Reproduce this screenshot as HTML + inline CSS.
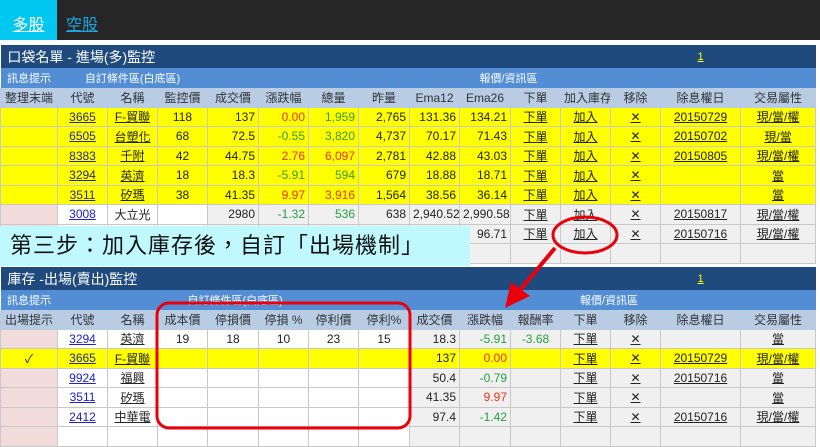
<!DOCTYPE html>
<html><head><meta charset="utf-8"><style>
*{margin:0;padding:0;box-sizing:border-box}
body{width:820px;height:443px;overflow:hidden;background:#fff;font-family:"Liberation Sans","Noto Sans CJK TC",sans-serif;font-size:12px;color:#222;position:relative}
.top{position:absolute;left:0;top:0;width:820px;height:40px;background:#262626}
.tab1{position:absolute;left:0;top:0;width:57px;height:40px;background:#00c8f0;color:#fff;font-size:16px;text-align:center;line-height:52px;text-decoration:underline}
.tab2{position:absolute;left:66px;top:0;height:40px;color:#19a8e0;font-size:16px;line-height:52px;text-decoration:underline}
table{position:absolute;left:0;border-collapse:collapse;table-layout:fixed;width:815px}
td{border:1px solid #c8c8c8;text-align:center;white-space:nowrap;overflow:hidden;padding:0 3px;height:19.5px;background:#f0f0f0}
.ti td{background:#1f4a7e;color:#fff;font-size:14px;text-align:left;border:none;height:23px}
.se td{background:#538ed5;color:#fff;border:none;height:20px;font-size:11px}
.hd td{background:#b8cce4;color:#333;font-size:12px;height:19px;border-color:#b8cce4}
.y td{background:#ff0}
td.r{text-align:right}
td.w{background:#fff}
td.p{background:#f2dcdb}
.u{text-decoration:underline}
.b{color:#2020d0;text-decoration:underline}
.g{color:#3a9a20}.rd{color:#f03010}.gg{color:#20a040}
.call{position:absolute;left:0;top:226px;width:470px;height:40px;background:#bff8ff;font-size:22px;line-height:40px;padding-left:10px;color:#111;letter-spacing:1px}
</style></head><body>
<div class="top"></div><div class="tab1">多股</div><div class="tab2">空股</div>
<table style="top:45px">
<colgroup><col width="57"><col width="50"><col width="50"><col width="50"><col width="51"><col width="50"><col width="50"><col width="51"><col width="50"><col width="51"><col width="50"><col width="50"><col width="50"><col width="80"><col width="75"></colgroup>
<tr class="ti"><td colspan="13">&nbsp;口袋名單 - 進場(多)監控</td><td colspan="2" style="color:#ff0;font-size:11px;text-align:left;padding-left:37px"><span class="u">1</span></td></tr>
<tr class="se"><td>訊息提示</td><td colspan="3">自訂條件區(白底區)</td><td colspan="11" style="text-align:left;padding-left:272px">報價/資訊區</td></tr>
<tr class="hd"><td>整理末端</td><td>代號</td><td>名稱</td><td>監控價</td><td>成交價</td><td>漲跌幅</td><td>總量</td><td>昨量</td><td>Ema12</td><td>Ema26</td><td>下單</td><td>加入庫存</td><td>移除</td><td>除息權日</td><td>交易屬性</td></tr>
<tr class="y"><td></td><td class="b" style="color:#2a2a8a">3665</td><td class="u">F-貿聯</td><td>118</td><td class="r">137</td><td class="r rd">0.00</td><td class="r g">1,959</td><td class="r">2,765</td><td class="r">131.36</td><td class="r">134.21</td><td class="u">下單</td><td class="u">加入</td><td class="u">✕</td><td class="u">20150729</td><td class="u">現/當/權</td></tr>
<tr class="y"><td></td><td class="b" style="color:#2a2a8a">6505</td><td class="u">台塑化</td><td>68</td><td class="r">72.5</td><td class="r g">-0.55</td><td class="r g">3,820</td><td class="r">4,737</td><td class="r">70.17</td><td class="r">71.43</td><td class="u">下單</td><td class="u">加入</td><td class="u">✕</td><td class="u">20150702</td><td class="u">現/當</td></tr>
<tr class="y"><td></td><td class="b" style="color:#2a2a8a">8383</td><td class="u">千附</td><td>42</td><td class="r">44.75</td><td class="r rd">2.76</td><td class="r rd">6,097</td><td class="r">2,781</td><td class="r">42.88</td><td class="r">43.03</td><td class="u">下單</td><td class="u">加入</td><td class="u">✕</td><td class="u">20150805</td><td class="u">現/當/權</td></tr>
<tr class="y"><td></td><td class="b" style="color:#2a2a8a">3294</td><td class="u">英濟</td><td>18</td><td class="r">18.3</td><td class="r g">-5.91</td><td class="r g">594</td><td class="r">679</td><td class="r">18.88</td><td class="r">18.71</td><td class="u">下單</td><td class="u">加入</td><td class="u">✕</td><td></td><td class="u">當</td></tr>
<tr class="y"><td></td><td class="b" style="color:#2a2a8a">3511</td><td class="u">矽瑪</td><td>38</td><td class="r">41.35</td><td class="r rd">9.97</td><td class="r rd">3,916</td><td class="r">1,564</td><td class="r">38.56</td><td class="r">36.14</td><td class="u">下單</td><td class="u">加入</td><td class="u">✕</td><td></td><td class="u">當</td></tr>
<tr><td class="p"></td><td class="w b">3008</td><td class="w">大立光</td><td class="w"></td><td class="r">2980</td><td class="r gg">-1.32</td><td class="r gg">536</td><td class="r">638</td><td class="r">2,940.52</td><td class="r">2,990.58</td><td class="u">下單</td><td class="u">加入</td><td class="u">✕</td><td class="u">20150817</td><td class="u">現/當/權</td></tr>
<tr><td class="p"></td><td class="w"></td><td class="w"></td><td class="w"></td><td></td><td></td><td></td><td></td><td></td><td class="r">96.71</td><td class="u">下單</td><td class="u">加入</td><td class="u">✕</td><td class="u">20150716</td><td class="u">現/當/權</td></tr>
<tr><td class="p"></td><td class="w"></td><td class="w"></td><td class="w"></td><td></td><td></td><td></td><td></td><td></td><td></td><td></td><td></td><td></td><td></td><td></td></tr>
</table>
<div class="call">第三步：加入庫存後，自訂「出場機制」</div>
<table style="top:267px">
<colgroup><col width="57"><col width="50"><col width="50"><col width="50"><col width="51"><col width="50"><col width="50"><col width="51"><col width="50"><col width="51"><col width="50"><col width="50"><col width="50"><col width="80"><col width="75"></colgroup>
<tr class="ti"><td colspan="13" style="height:19px">&nbsp;庫存 -出場(賣出)監控</td><td colspan="2" style="color:#ff0;font-size:11px;text-align:left;padding-left:37px"><span class="u">1</span></td></tr>
<tr class="se"><td>訊息提示</td><td colspan="8" style="text-align:left;padding-left:130px">自訂條件區(白底區)</td><td colspan="6" style="padding-right:60px">報價/資訊區</td></tr>
<tr class="hd"><td>出場提示</td><td>代號</td><td>名稱</td><td>成本價</td><td>停損價</td><td>停損 %</td><td>停利價</td><td>停利%</td><td>成交價</td><td>漲跌幅</td><td>報酬率</td><td>下單</td><td>移除</td><td>除息權日</td><td>交易屬性</td></tr>
<tr><td class="p"></td><td class="w b">3294</td><td class="w u">英濟</td><td class="w">19</td><td class="w">18</td><td class="w">10</td><td class="w">23</td><td class="w">15</td><td class="r">18.3</td><td class="r gg">-5.91</td><td class="gg">-3.68</td><td class="u">下單</td><td class="u">✕</td><td></td><td class="u">當</td></tr>
<tr class="y"><td>✓</td><td class="b" style="color:#2a2a8a">3665</td><td class="u">F-貿聯</td><td></td><td></td><td></td><td></td><td></td><td class="r">137</td><td class="r rd">0.00</td><td></td><td class="u">下單</td><td class="u">✕</td><td class="u">20150729</td><td class="u">現/當/權</td></tr>
<tr><td class="p"></td><td class="w b">9924</td><td class="w u">福興</td><td class="w"></td><td class="w"></td><td class="w"></td><td class="w"></td><td class="w"></td><td class="r">50.4</td><td class="r gg">-0.79</td><td></td><td class="u">下單</td><td class="u">✕</td><td class="u">20150716</td><td class="u">當</td></tr>
<tr><td class="p"></td><td class="w b">3511</td><td class="w u">矽瑪</td><td class="w"></td><td class="w"></td><td class="w"></td><td class="w"></td><td class="w"></td><td class="r">41.35</td><td class="r rd">9.97</td><td></td><td class="u">下單</td><td class="u">✕</td><td></td><td class="u">當</td></tr>
<tr><td class="p"></td><td class="w b">2412</td><td class="w u">中華電</td><td class="w"></td><td class="w"></td><td class="w"></td><td class="w"></td><td class="w"></td><td class="r">97.4</td><td class="r gg">-1.42</td><td></td><td class="u">下單</td><td class="u">✕</td><td class="u">20150716</td><td class="u">現/當/權</td></tr>
<tr><td class="p"></td><td class="w"></td><td class="w"></td><td class="w"></td><td class="w"></td><td class="w"></td><td class="w"></td><td class="w"></td><td></td><td></td><td></td><td></td><td></td><td></td><td></td></tr>
</table>
<svg style="position:absolute;left:0;top:0" width="820" height="443">
<rect x="157" y="303" width="253" height="125" rx="12" fill="none" stroke="#e8000a" stroke-width="3"/>
<ellipse cx="585" cy="235" rx="32" ry="18" fill="none" stroke="#e8000a" stroke-width="3"/>
<line x1="555" y1="248" x2="520" y2="290" stroke="#e8000a" stroke-width="4"/>
<polygon points="505,308 511,282 530,296" fill="#e8000a"/>
</svg>
</body></html>
